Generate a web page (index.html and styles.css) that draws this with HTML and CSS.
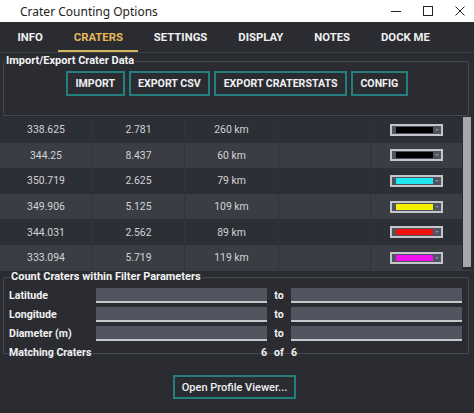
FILE: index.html
```html
<!DOCTYPE html>
<html lang="en">
<head>
    <meta charset="UTF-8">
    <title>Crater Counting Options</title>
<link rel="stylesheet" href="styles.css">
</head>
<body>
    <div class="titlebar">
        <span class="title">Crater Counting Options</span>
        <div class="controls">
            <svg width="12" height="12" viewBox="0 0 12 12"><path d="M1 6.5h10" stroke="#222" stroke-width="1"/></svg>
            <svg width="12" height="12" viewBox="0 0 12 12"><rect x="1.5" y="1.5" width="9" height="9" fill="none" stroke="#222" stroke-width="1"/></svg>
            <svg width="12" height="12" viewBox="0 0 12 12"><path d="M1.5 1.5l9 9M10.5 1.5l-9 9" stroke="#222" stroke-width="1"/></svg>
        </div>
    </div>
    <div class="app">
        <div class="tabs">
            <div class="tab">INFO</div>
            <div class="tab active">CRATERS</div>
            <div class="tab">SETTINGS</div>
            <div class="tab">DISPLAY</div>
            <div class="tab">NOTES</div>
            <div class="tab">DOCK ME</div>
        </div>

        <fieldset class="group import-group">
            <legend>Import/Export Crater Data</legend>
            <div class="button-row">
                <button class="btn">IMPORT</button>
                <button class="btn">EXPORT CSV</button>
                <button class="btn">EXPORT CRATERSTATS</button>
                <button class="btn">CONFIG</button>
            </div>
        </fieldset>

        <div class="table-wrap">
            <div class="table" id="crater-table">
                <!-- rows filled by script -->
            </div>
            <div class="scrollbar"><div class="thumb"></div></div>
        </div>

        <fieldset class="group filter-group">
            <legend>Count Craters within Filter Parameters</legend>
            <div class="filter-row">
                <label>Latitude</label>
                <input type="text" class="field">
                <span class="to">to</span>
                <input type="text" class="field">
            </div>
            <div class="filter-row">
                <label>Longitude</label>
                <input type="text" class="field">
                <span class="to">to</span>
                <input type="text" class="field">
            </div>
            <div class="filter-row">
                <label>Diameter (m)</label>
                <input type="text" class="field">
                <span class="to">to</span>
                <input type="text" class="field">
            </div>
            <div class="filter-row">
                <label>Matching Craters</label>
                <span class="count">6</span>
                <span class="to">of</span>
                <span class="count total">6</span>
            </div>
        </fieldset>

        <div class="footer">
            <button class="btn plain">Open Profile Viewer...</button>
        </div>
    </div>

    <script>
        // crater list: lon, lat, diameter, colour
        const craters = [
            ['338.625', '2.781', '260 km', '#000000'],
            ['344.25', '8.437', '60 km', '#000000'],
            ['350.719', '2.625', '79 km', '#1ee8f0'],
            ['349.906', '5.125', '109 km', '#f4f000'],
            ['344.031', '2.562', '89 km', '#f01010'],
            ['333.094', '5.719', '119 km', '#f010f0']
        ];

        const table = document.getElementById('crater-table');
        craters.forEach(c => {
            const row = document.createElement('div');
            row.className = 'row';
            row.innerHTML = `
                <div class="cell">${c[0]}</div>
                <div class="cell">${c[1]}</div>
                <div class="cell">${c[2]}</div>
                <div class="cell"></div>
                <div class="cell"><span class="swatch"><span class="swatch-fill" style="background:${c[3]}"></span><span class="arrow"></span></span></div>
            `;
            table.appendChild(row);
        });
    </script>
</body>
</html>
```

FILE: styles.css
```css
html, body {
    margin: 0;
    height: 100%;
}
body {
    font-family: Roboto, "Liberation Sans", sans-serif;
    background-color: #2a2c32;
    overflow: hidden;
}
.titlebar {
    height: 22px;
    background-color: #fff;
    display: flex;
    align-items: center;
    justify-content: space-between;
    font-family: "Noto Sans", "Open Sans", sans-serif;
    font-size: 12px;
    color: #222;
}
.titlebar .title {
    padding-left: 20px;
}
.controls {
    display: flex;
    gap: 20px;
    padding-right: 8px;
}
.app {
    background-color: #2a2c32;
    height: 391px;
    color: #e6e6e6;
}
.tabs {
    display: flex;
    height: 30px;
    border-bottom: 1px solid #3b3e44;
    padding-left: 2px;
}
.tab {
    font-weight: bold;
    font-size: 11.3px;
    color: #f0f0f0;
    padding: 0 15.5px;
    line-height: 32px;
    height: 28px;
    white-space: nowrap;
}
.tab.active {
    color: #e8b85a;
    border-bottom: 2px solid #d4b860;
}
.group {
    margin: 0 5px 0 3px;
    padding: 0;
    border: 1px solid #45484e;
    border-radius: 1px;
}
.group legend {
    font-family: Roboto, sans-serif;
    font-weight: bold;
    font-size: 11px;
    color: #f2f2f2;
    padding: 0 1px;
    margin-left: 1px;
    line-height: 14px;
}
.import-group {
    height: 60px;
    margin-top: 1px;
}
.button-row {
    display: flex;
    gap: 4px;
    padding: 3px 0 0 62px;
}
.btn {
    background-color: transparent;
    border: 2px solid #23807f;
    color: #f0f0f0;
    font-family: Roboto, sans-serif;
    font-weight: bold;
    font-size: 10.6px;
    height: 25px;
    padding: 0 7.5px;
    cursor: pointer;
}
.table-wrap {
    position: relative;
    margin-top: 1px;
    height: 153px;
    overflow: hidden;
    border-bottom: 1px solid #3b3e44;
}
.table {
    margin-right: 12px;
}
.row {
    display: grid;
    grid-template-columns: 93px 92px 94px 92px 91px;
    height: 25.6px;
    background-color: #2c2f36;
}
.row:nth-child(even) {
    background-color: #3a3d44;
}
.cell {
    display: flex;
    align-items: center;
    justify-content: center;
    font-size: 10.4px;
    color: #d2d3d6;
    border-right: 1px solid #30333a;
}
.cell:last-child {
    border-right: none;
}
.swatch {
    position: relative;
    width: 49px;
    height: 8px;
    border: 2px solid #c4c5c9;
    background-color: #4f5260;
    padding: 0;
    display: flex;
    align-items: center;
}
.swatch-fill {
    width: 37px;
    height: 6px;
    margin-left: 4px;
}
.arrow {
    width: 0;
    height: 0;
    margin-left: 2px;
    border-left: 2px solid transparent;
    border-right: 2px solid transparent;
    border-top: 2px solid #8a8d99;
}
.scrollbar {
    position: absolute;
    top: 0;
    right: 3px;
    width: 8px;
    height: 150px;
    background-color: #2a2c32;
}
.thumb {
    height: 100%;
    background-color: #a7a8aa;
}
.filter-group {
    margin-top: -1px;
    height: 80px;
    padding: 2px 6px 0 5px;
}
.filter-row {
    display: flex;
    align-items: center;
    height: 19px;
}
.filter-row label {
    font-family: Roboto, sans-serif;
    font-weight: bold;
    font-size: 10.6px;
    color: #f2f2f2;
    width: 87px;
    white-space: nowrap;
}
.field {
    width: 171px;
    height: 13px;
    box-sizing: content-box;
    padding: 0;
    border: none;
    border-bottom: 2px solid #c7c8cc;
    background-color: #52555f;
}
.to {
    font-family: Roboto, sans-serif;
    font-weight: bold;
    font-size: 10.6px;
    color: #f2f2f2;
    width: 24px;
    text-align: center;
}
.count {
    font-family: Roboto, sans-serif;
    font-weight: bold;
    font-size: 10.6px;
    color: #f2f2f2;
    width: 171px;
    text-align: right;
}
.count.total {
    text-align: left;
}
.footer {
    display: flex;
    justify-content: center;
    padding-top: 21px;
    padding-right: 5px;
}
.btn.plain {
    font-family: Roboto, sans-serif;
    font-weight: 500;
    font-size: 11px;
    height: 24px;
    padding: 0 7px;
}
```
